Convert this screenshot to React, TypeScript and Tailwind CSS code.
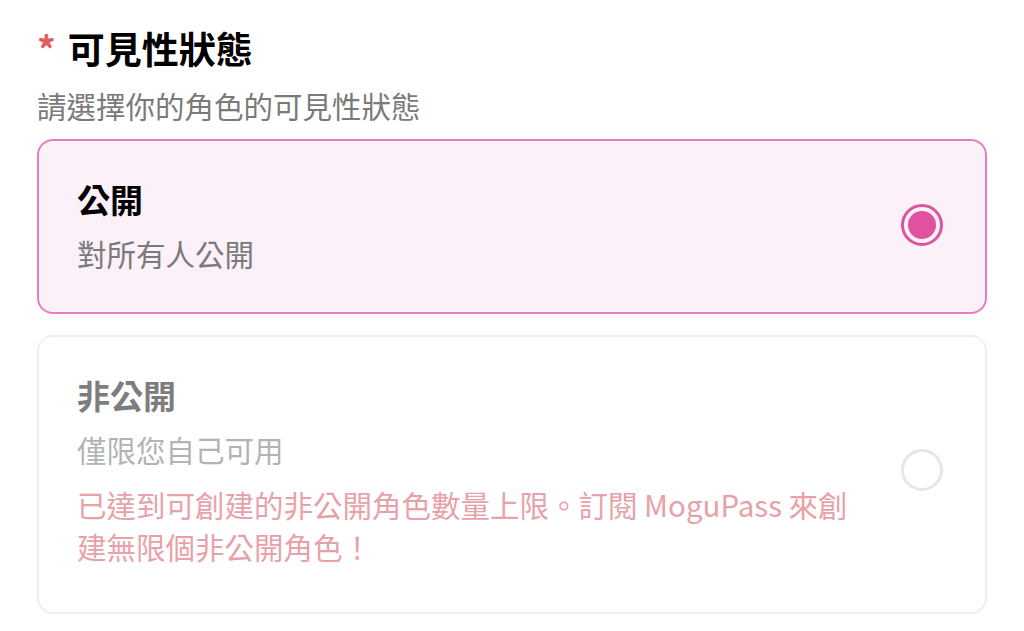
import React from 'react';

const font = { fontFamily: '"Noto Sans CJK TC", "Noto Sans", sans-serif' };

interface OptionProps {
    title: string;
    desc: string;
    note?: string;
    selected?: boolean;
    disabled?: boolean;
}

const Radio: React.FC<{ checked?: boolean }> = ({ checked }) =>
    checked ? (
        <div className="flex h-[42px] w-[42px] shrink-0 items-center justify-center rounded-full border-[3px] border-[#e0529f]">
            <div className="h-[28px] w-[28px] rounded-full bg-[#e0529f]" />
        </div>
    ) : (
        <div className="h-[42px] w-[42px] shrink-0 rounded-full border-[3px] border-[#e6e6e6]" />
    );

const Option: React.FC<OptionProps> = ({ title, desc, note, selected, disabled }) => (
    <div
        className={
            selected
                ? 'flex items-center justify-between rounded-[16px] border-2 border-[#e27fc2] bg-[#fcf0f9] pl-[38px] pr-[42px] pt-[36px] pb-[39px]'
                : 'flex items-center justify-between rounded-[16px] border-2 border-[#efefef] bg-white pl-[38px] pr-[42px] pt-[36px] pb-[45px]'
        }
    >
        <div className="flex w-[800px] flex-col">
            <div className={disabled ? 'text-[33px] font-bold leading-[44px] text-[#7d7d7d]' : 'text-[33px] font-bold leading-[44px] text-black'}>
                {title}
            </div>
            <div className={disabled ? 'mt-[12px] text-[29.5px] leading-[40px] text-[#b3b3b3]' : 'mt-[12px] text-[29.5px] leading-[40px] text-[#7a7a7a]'}>
                {desc}
            </div>
            {note && <div className="mt-[14px] text-[29.5px] leading-[42px] text-[#e8a1a8]">{note}</div>}
        </div>
        <Radio checked={selected} />
    </div>
);

export default function App() {
    return (
        <div className="min-h-screen bg-white px-[37px] pt-[26px]" style={font}>
            <div className="flex items-center text-[37px] font-bold leading-[44px] text-black">
                <span className="mr-[12px] text-[#e35d5d]">*</span>
                可見性狀態
            </div>
            <div className="mt-[15px] text-[29.5px] leading-[40px] text-[#7a7a7a]">請選擇你的角色的可見性狀態</div>
            <div className="mt-[14px] flex flex-col gap-[21px]">
                <Option title="公開" desc="對所有人公開" selected />
                <Option
                    title="非公開"
                    desc="僅限您自己可用"
                    note="已達到可創建的非公開角色數量上限。訂閱 MoguPass 來創建無限個非公開角色！"
                    disabled
                />
            </div>
        </div>
    );
}
